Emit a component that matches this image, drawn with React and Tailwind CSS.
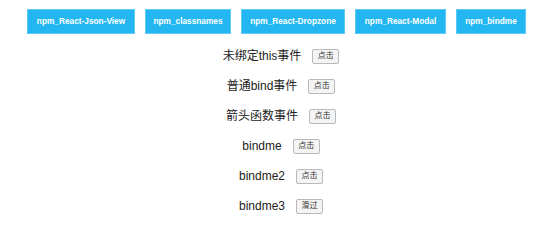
import React from "react";

const packages = [
  { name: "npm_React-Json-View", width: "w-[108px]" },
  { name: "npm_classnames", width: "w-[86px]" },
  { name: "npm_React-Dropzone", width: "w-[104px]" },
  { name: "npm_React-Modal", width: "w-[91px]" },
  { name: "npm_bindme", width: "w-[70px]" },
];

const rows = [
  { label: "未绑定this事件", action: "点击" },
  { label: "普通bind事件", action: "点击" },
  { label: "箭头函数事件", action: "点击" },
  { label: "bindme", action: "点击" },
  { label: "bindme2", action: "点击" },
  { label: "bindme3", action: "滑过" },
];

const App = () => {
  return (
    <div
      className="w-[550px] h-[243px] bg-white text-[#222]"
      style={{ fontFamily: '"Liberation Sans", "Noto Sans CJK SC", sans-serif' }}
    >
      {/* Package nav */}
      <div className="flex justify-center gap-[10px] pt-[9px] pl-[3px]">
        {packages.map((pkg) => (
          <button
            key={pkg.name}
            className={`${pkg.width} h-[25px] bg-[#22b7f1] border border-[#5ccaf5] text-white text-[8.3px] font-bold whitespace-nowrap flex items-center justify-center`}
          >
            {pkg.name}
          </button>
        ))}
      </div>

      {/* Event demos */}
      <div className="flex flex-col mt-[7px] pl-[12px]">
        {rows.map((row) => (
          <div
            key={row.label}
            className="h-[30px] flex items-center justify-center gap-[11px]"
          >
            <span className="text-[12px]">{row.label}</span>
            <button className="w-[27px] h-[15px] bg-[#f4f4f4] border border-[#b9b9b9] rounded-[2px] text-[8px] text-[#333] flex items-center justify-center leading-none">
              {row.action}
            </button>
          </div>
        ))}
      </div>
    </div>
  );
};

export default App;
